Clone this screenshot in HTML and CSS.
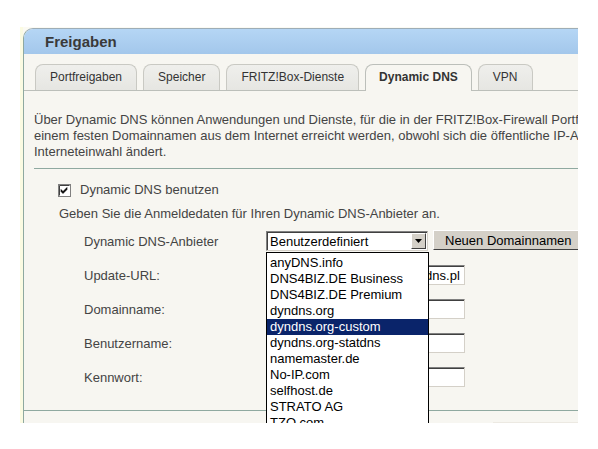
FILE: index.html
```html
<!DOCTYPE html>
<html lang="de">
<head>
    <meta charset="UTF-8">
    <meta name="viewport" content="width=device-width, initial-scale=1.0">
    <title>Freigaben - Dynamic DNS</title>
    <link rel="stylesheet" href="styles.css">
</head>
<body>
    <div class="frame">
        <div class="panel">
            <div class="panel-head">Freigaben</div>

            <ul class="tabs">
                <li class="tab">Portfreigaben</li>
                <li class="tab">Speicher</li>
                <li class="tab">FRITZ!Box-Dienste</li>
                <li class="tab active">Dynamic DNS</li>
                <li class="tab">VPN</li>
            </ul>

            <div class="content">
                <p class="intro">Über Dynamic DNS können Anwendungen und Dienste, für die in der FRITZ!Box-Firewall Portfreigaben eingerichtet wurden, unter<br>
                einem festen Domainnamen aus dem Internet erreicht werden, obwohl sich die öffentliche IP-Adresse der FRITZ!Box mit jeder<br>
                Interneteinwahl ändert.</p>

                <hr class="sep">

                <label class="check-row">
                    <span class="checkbox">
                        <svg width="13" height="13" viewBox="0 0 13 13">
                            <rect x="0.5" y="0.5" width="12" height="12" fill="#fff" stroke="#808080"/>
                            <path d="M1.5 11.5V1.5h10" fill="none" stroke="#404040"/>
                            <path d="M3 5.5l2 2 4-4v2l-4 4-2-2z" fill="#000" stroke="#000" stroke-width="0.6"/>
                        </svg>
                    </span>
                    Dynamic DNS benutzen
                </label>

                <p class="hint">Geben Sie die Anmeldedaten für Ihren Dynamic DNS-Anbieter an.</p>

                <div class="form">
                    <div class="form-row">
                        <span class="label">Dynamic DNS-Anbieter</span>
                        <div class="select-wrap">
                            <div class="select">
                                <span class="select-value">Benutzerdefiniert</span>
                                <span class="select-arrow">
                                    <svg width="7" height="4" viewBox="0 0 7 4"><path d="M0 0h7L3.5 4z" fill="#000"/></svg>
                                </span>
                            </div>
                            <ul class="dropdown">
                                <li>anyDNS.info</li>
                                <li>DNS4BIZ.DE Business</li>
                                <li>DNS4BIZ.DE Premium</li>
                                <li>dyndns.org</li>
                                <li class="selected">dyndns.org-custom</li>
                                <li>dyndns.org-statdns</li>
                                <li>namemaster.de</li>
                                <li>No-IP.com</li>
                                <li>selfhost.de</li>
                                <li>STRATO AG</li>
                                <li>TZO.com</li>
                                <li>Benutzerdefiniert</li>
                            </ul>
                        </div>
                        <button class="btn">Neuen Domainnamen</button>
                    </div>
                    <div class="form-row">
                        <span class="label">Update-URL:</span>
                        <input class="field" type="text" value="http://www.dynamicupdate-dns.pl">
                    </div>
                    <div class="form-row">
                        <span class="label">Domainname:</span>
                        <input class="field" type="text">
                    </div>
                    <div class="form-row">
                        <span class="label">Benutzername:</span>
                        <input class="field" type="text">
                    </div>
                    <div class="form-row">
                        <span class="label">Kennwort:</span>
                        <input class="field" type="password">
                    </div>
                </div>
            </div>

            <div class="panel-foot">
                <span class="foot-btn"></span>
            </div>
        </div>
    </div>
</body>
</html>
```

FILE: styles.css
```css
/* Page */
body {
    margin: 0;
    background: #fff;
    font-family: "Liberation Sans", Arial, sans-serif;
    font-size: 13px;
    color: #444;
}

.frame {
    margin: 27px 0 0 20px;
    width: 555px;
    height: 395px;
    padding-top: 1px;
    background: #fbfaf3;
    border-left: 3px solid #fbfbe2;
    overflow: hidden;
}

/* Panel */
.panel {
    width: 720px;
    min-height: 420px;
    background: #f7f6f1;
    border-left: 1px solid #8fa9a0;
    border-top: 1px solid #9eadb6;
    border-top-left-radius: 10px;
    overflow: hidden;
}

.panel-head {
    height: 25px;
    line-height: 25px;
    padding-left: 21px;
    background: linear-gradient(#b5d6f5, #a3c7eb);
    font-size: 15px;
    font-weight: bold;
    color: #3a3a3a;
}

/* Tabs */
.tabs {
    display: flex;
    gap: 6px;
    list-style: none;
    margin: 10px 0 0;
    padding: 0 0 0 11px;
    border-bottom: 1px solid #bcbfba;
}

.tab {
    height: 25px;
    line-height: 25px;
    padding: 0 14px;
    font-size: 12px;
    color: #333;
    background: linear-gradient(#efefec, #e6e6e2);
    border: 1px solid #c9c9c3;
    border-bottom: none;
    border-radius: 8px 8px 0 0;
}

.tab.active {
    height: 26px;
    margin-bottom: -1px;
    padding: 0 13px;
    font-weight: bold;
    background: #f7f6f1;
    border-color: #bcbfba;
}

/* Content */
.content {
    padding: 0 0 23px 10px;
}

.intro {
    margin: 21px 0 0;
    line-height: 16px;
    white-space: nowrap;
}

.sep {
    margin: 8px 0 0;
    border: 0;
    border-top: 1px solid #8fa9a0;
}

.check-row {
    display: flex;
    align-items: center;
    gap: 9px;
    margin: 13px 0 0 24px;
    line-height: 16px;
}

.checkbox {
    display: flex;
    width: 13px;
    height: 13px;
}

.hint {
    margin: 8px 0 0 25px;
    line-height: 16px;
}

/* Form */
.form {
    display: flex;
    flex-direction: column;
    gap: 14px;
    margin: 9px 0 0 50px;
}

.form-row {
    display: flex;
    align-items: center;
    height: 20px;
}

.label {
    width: 182px;
    flex-shrink: 0;
}

.select-wrap {
    position: relative;
    width: 162px;
    height: 20px;
}

.select {
    display: flex;
    align-items: center;
    justify-content: space-between;
    box-sizing: border-box;
    height: 20px;
    background: #fff;
    border: 1px solid;
    border-color: #808080 #d4d0c8 #d4d0c8 #808080;
    box-shadow: inset 1px 1px 0 #404040;
    color: #000;
}

.select-value {
    padding-left: 3px;
}

.select-arrow {
    display: flex;
    align-items: center;
    justify-content: center;
    box-sizing: border-box;
    width: 15px;
    height: 16px;
    margin-right: 1px;
    background: #d4d0c8;
    border: 1px solid;
    border-color: #fff #404040 #404040 #fff;
}

.dropdown {
    position: absolute;
    top: 21px;
    left: 0;
    width: 161px;
    margin: 0;
    padding: 2px 0 0;
    list-style: none;
    background: #fff;
    border: 1px solid #000;
    color: #000;
    z-index: 2;
}

.dropdown li {
    height: 16px;
    line-height: 16px;
    padding-left: 3px;
    white-space: nowrap;
}

.dropdown li.selected {
    background: #0a246a;
    color: #fff;
}

.btn {
    height: 20px;
    margin: -2px 0 0 5px;
    padding: 0 11px;
    font-family: inherit;
    font-size: 13px;
    color: #000;
    background: #d4d0c8;
    border: 1px solid;
    border-color: #fff #404040 #404040 #fff;
    white-space: nowrap;
}

.field {
    box-sizing: border-box;
    width: 199px;
    height: 20px;
    margin: 0;
    padding: 0 2px;
    font-family: inherit;
    font-size: 13px;
    color: #000;
    background: #fff;
    border: 1px solid;
    border-color: #808080 #d4d0c8 #d4d0c8 #808080;
    box-shadow: inset 1px 1px 0 #404040;
}

/* Footer */
.panel-foot {
    border-top: 1px solid #8fa9a0;
    padding: 11px 0 0 469px;
}

.foot-btn {
    display: block;
    width: 120px;
    height: 20px;
    background: #d4d0c8;
    border-top: 1px solid #ece9e2;
}
```
